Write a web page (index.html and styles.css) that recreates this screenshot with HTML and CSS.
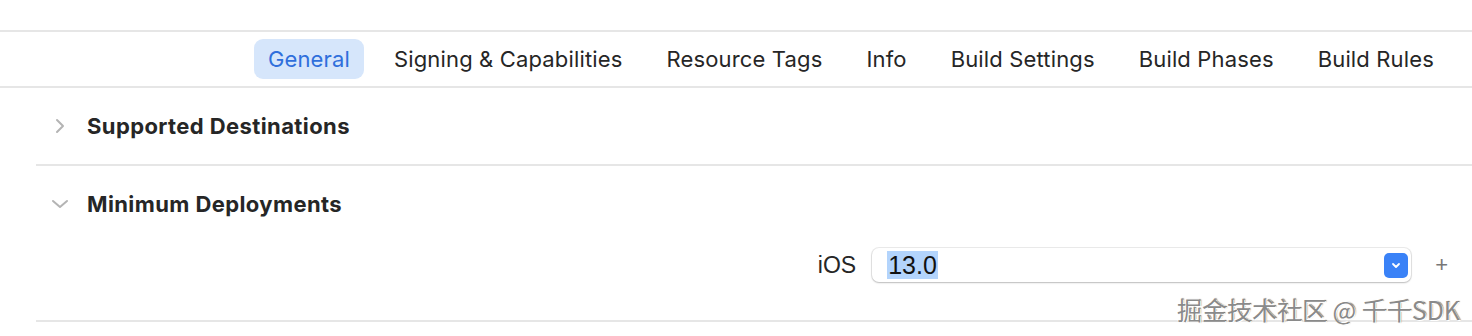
FILE: index.html
```html
<!DOCTYPE html>
<html lang="en">
<head>
  <meta charset="UTF-8" />
  <title>Target General</title>
  <link rel="stylesheet" href="styles.css">
</head>
<body>

<div class="top-space"></div>

<!-- Editor tabs -->
<div class="tabbar">
  <span class="tab active">General</span>
  <span class="tab">Signing &amp; Capabilities</span>
  <span class="tab">Resource Tags</span>
  <span class="tab">Info</span>
  <span class="tab">Build Settings</span>
  <span class="tab">Build Phases</span>
  <span class="tab">Build Rules</span>
</div>

<div class="sections">
  <div class="section">
    <div class="section-header">
      <span class="chevron">
        <svg width="12" height="16" viewBox="0 0 12 16"><path d="M3 2 L9 8 L3 14" fill="none" stroke="#b4b4b4" stroke-width="2" stroke-linecap="round" stroke-linejoin="round"/></svg>
      </span>
      <span class="section-title">Supported Destinations</span>
    </div>
  </div>

  <div class="section">
    <div class="section-header">
      <span class="chevron">
        <svg width="18" height="12" viewBox="0 0 18 12"><path d="M2 3 L9 9 L16 3" fill="none" stroke="#b4b4b4" stroke-width="2" stroke-linecap="round" stroke-linejoin="round"/></svg>
      </span>
      <span class="section-title">Minimum Deployments</span>
    </div>
    <div class="deploy-row">
      <span class="row-label">iOS</span>
      <div class="popup">
        <span class="popup-value"><span class="selected">13.0</span></span>
        <span class="popup-button">
          <svg width="10" height="7" viewBox="0 0 10 7"><path d="M2 2 L5 5 L8 2" fill="none" stroke="#fff" stroke-width="1.8" stroke-linecap="round" stroke-linejoin="round"/></svg>
        </span>
      </div>
      <span class="add-button">+</span>
    </div>
  </div>
</div>

<div class="watermark">掘金技术社区 @ 千千SDK</div>

</body>
</html>
```

FILE: styles.css
```css
/* Global styles */
body {
  margin: 0;
  font-family: Inter, 'Noto Sans', sans-serif;
  background-color: #fff;
  color: #262626;
  position: relative;
  height: 336px;
  overflow: hidden;
}

.top-space {
  height: 30px;
}

/* Tab bar */
.tabbar {
  display: flex;
  justify-content: flex-end;
  align-items: center;
  gap: 16px;
  height: 54px;
  padding-right: 24px;
  border-top: 2px solid #e6e6e6;
  border-bottom: 2px solid #e6e6e6;
}

.tab {
  font-size: 22px;
  letter-spacing: 0.15px;
  padding: 0 14px;
  height: 40px;
  line-height: 40px;
  border-radius: 9px;
  color: #262626;
  white-space: nowrap;
}

.tab.active {
  background-color: #d6e6fb;
  color: #2f6fdc;
}

/* Sections */
.sections {
  margin-left: 36px;
}

.section {
  border-bottom: 2px solid #e6e6e6;
}

.section-header {
  display: flex;
  align-items: center;
  height: 76px;
}

.chevron {
  display: flex;
  justify-content: center;
  align-items: center;
  width: 32px;
  margin-left: 8px;
  margin-right: 11px;
}

.section-title {
  font-size: 22px;
  font-weight: 700;
  letter-spacing: 0.4px;
  color: #262626;
}

/* Deployment row */
.deploy-row {
  display: flex;
  justify-content: flex-end;
  align-items: center;
  padding: 6px 24px 38px 0;
}

.row-label {
  font-family: 'Liberation Sans', Arial, sans-serif;
  font-size: 23px;
  margin-right: 16px;
}

.popup {
  display: flex;
  align-items: center;
  justify-content: space-between;
  width: 539px;
  height: 34px;
  box-sizing: border-box;
  padding: 0 3px 0 15px;
  border-radius: 7px;
  background-color: #fff;
  box-shadow: 0 0 0 1px rgba(0, 0, 0, 0.08), 0 1px 2px rgba(0, 0, 0, 0.2);
}

.popup-value {
  font-family: 'Liberation Sans', Arial, sans-serif;
  font-size: 25px;
  color: #111;
}

.selected {
  background-color: #b3d4fc;
  padding: 0 1px;
}

.popup-button {
  display: flex;
  justify-content: center;
  align-items: center;
  width: 24px;
  height: 25px;
  border-radius: 5px;
  background-color: #3a82f7;
}

.add-button {
  font-family: 'Liberation Sans', Arial, sans-serif;
  font-size: 22px;
  color: #777;
  margin-left: 24px;
}

/* Overlay watermark */
.watermark {
  position: absolute;
  right: 12px;
  top: 291px;
  font-family: 'Noto Sans CJK SC', 'Liberation Sans', sans-serif;
  font-size: 25px;
  color: #8a8a8a;
  text-shadow: 1px 1px 0 #fff, -1px -1px 0 #fff, 1px 0 1px #555;
}
```
